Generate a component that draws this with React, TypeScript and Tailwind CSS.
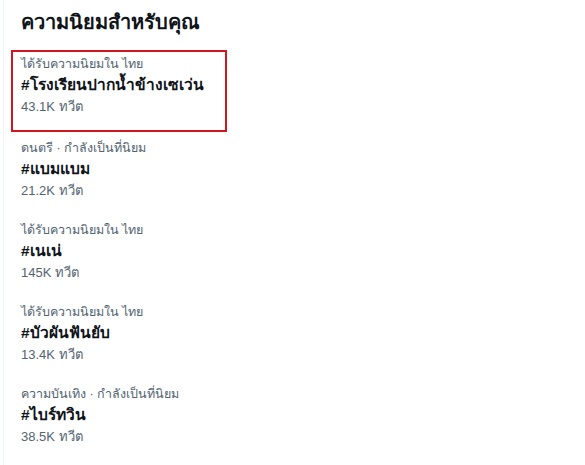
const trends = [
  { meta: "ได้รับความนิยมใน ไทย", tag: "#โรงเรียนปากน้ำข้างเซเว่น", count: "43.1K ทวีต", highlight: true },
  { meta: "ดนตรี · กำลังเป็นที่นิยม", tag: "#แบมแบม", count: "21.2K ทวีต" },
  { meta: "ได้รับความนิยมใน ไทย", tag: "#เนเน่", count: "145K ทวีต" },
  { meta: "ได้รับความนิยมใน ไทย", tag: "#บัวผันฟันยับ", count: "13.4K ทวีต" },
  { meta: "ความบันเทิง · กำลังเป็นที่นิยม", tag: "#ไบร์ทวิน", count: "38.5K ทวีต" },
];

export default function App() {
  return (
    <div className="w-[585px] h-[465px] bg-white overflow-hidden font-['Liberation_Sans','Noto_Sans','DejaVu_Sans',sans-serif]">
      <div className="ml-[3px] h-full border-l border-[#eff3f4] pt-[8px]">
        <h2 className="pl-[17px] text-[20px] font-bold leading-[28px] text-[#0f1419]">
          ความนิยมสำหรับคุณ
        </h2>
        <div className="mt-[14px] flex flex-col">
          {trends.map((t, i) => (
            <div
              key={i}
              className={
                t.highlight
                  ? "ml-[7px] mb-[3px] w-[216px] h-[82px] border-2 border-[#d2161e] pl-[8px] pt-[4px]"
                  : "pl-[17px] pt-[5px] h-[82px]"
              }
            >
              <div className="text-[12.5px] leading-[17px] text-[#536471]">{t.meta}</div>
              <div className="mt-[2px] text-[15.5px] font-bold leading-[20px] text-[#0f1419]">{t.tag}</div>
              <div className="mt-[3px] text-[13px] leading-[17px] text-[#536471]">{t.count}</div>
            </div>
          ))}
        </div>
      </div>
    </div>
  );
}
